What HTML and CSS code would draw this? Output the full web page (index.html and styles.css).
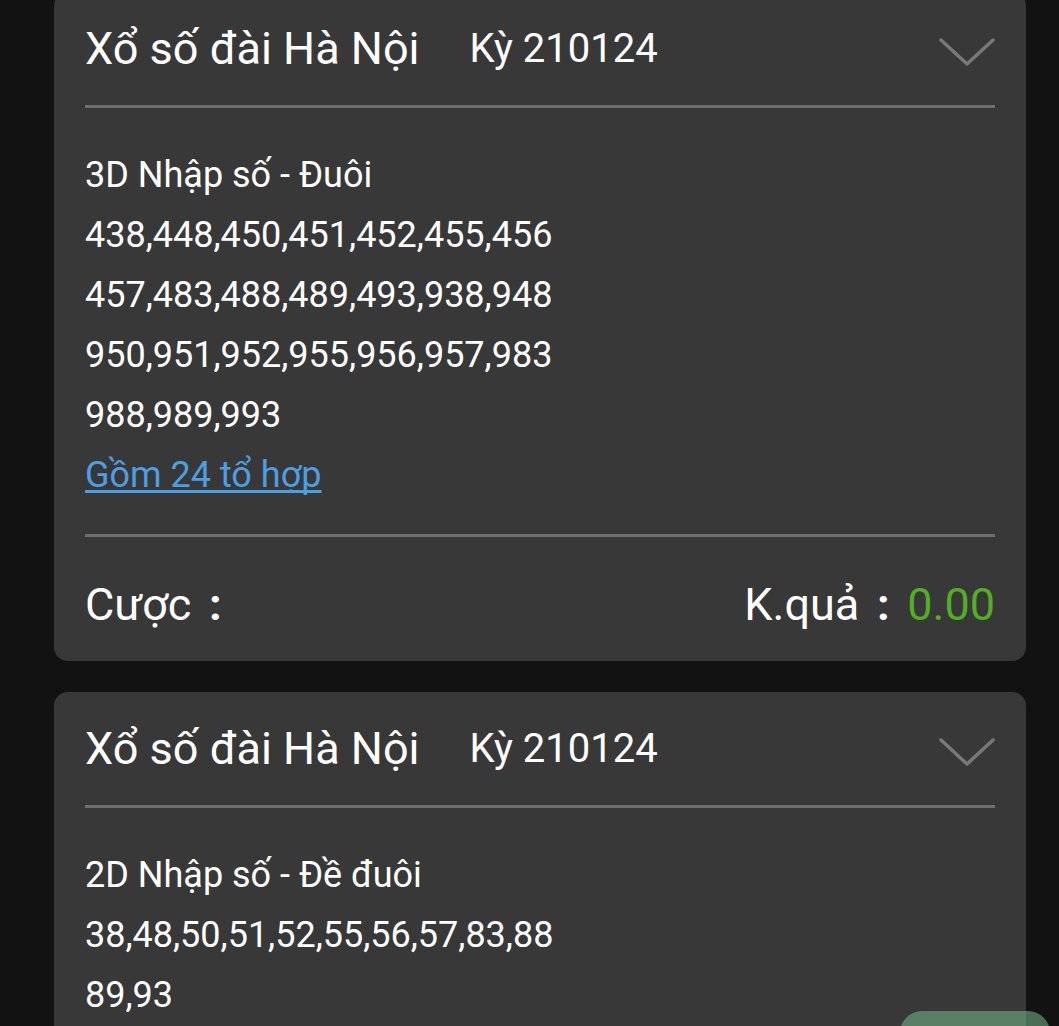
FILE: index.html
```html
<!DOCTYPE html>
<html lang="vi">
<head>
  <meta charset="UTF-8">
  <meta name="viewport" content="width=device-width, initial-scale=1.0">
  <title>Lịch sử cược</title>
  <link rel="stylesheet" href="styles.css">
</head>
<body>
  <div class="bet-list">

    <div class="bet-card">
      <div class="bet-head">
        <span class="bet-title">Xổ số đài Hà Nội</span>
        <span class="bet-issue">Kỳ 210124</span>
        <svg class="chevron" width="56" height="30" viewBox="0 0 56 30">
          <polyline points="2,3 28,27 54,3" fill="none" stroke="#787878" stroke-width="3.5" stroke-linecap="round" stroke-linejoin="round"/>
        </svg>
      </div>
      <div class="bet-body">
        <p>3D Nhập số - Đuôi</p>
        <p>438,448,450,451,452,455,456</p>
        <p>457,483,488,489,493,938,948</p>
        <p>950,951,952,955,956,957,983</p>
        <p>988,989,993</p>
        <p><a class="combo-link" href="#">Gồm 24 tổ hợp</a></p>
      </div>
      <div class="bet-foot">
        <span>Cược<span class="colon">:</span></span>
        <span>K.quả<span class="colon">:</span><span class="win">0.00</span></span>
      </div>
    </div>

    <div class="bet-card">
      <div class="bet-head">
        <span class="bet-title">Xổ số đài Hà Nội</span>
        <span class="bet-issue">Kỳ 210124</span>
        <svg class="chevron" width="56" height="30" viewBox="0 0 56 30">
          <polyline points="2,3 28,27 54,3" fill="none" stroke="#787878" stroke-width="3.5" stroke-linecap="round" stroke-linejoin="round"/>
        </svg>
      </div>
      <div class="bet-body">
        <p>2D Nhập số - Đề đuôi</p>
        <p>38,48,50,51,52,55,56,57,83,88</p>
        <p>89,93</p>
      </div>
    </div>

  </div>

  <button class="float-btn"></button>
</body>
</html>
```

FILE: styles.css
```css
body {
  margin: 0;
  padding: 0;
  background-color: #121212;
  color: #fff;
  font-family: Roboto, "Noto Sans", sans-serif;
  overflow: hidden;
}

.bet-list {
  margin-top: -8px;
  padding: 0 33px 0 54px;
}

.bet-card {
  background-color: #383838;
  border-radius: 14px;
  padding: 0 31px;
  margin-bottom: 31px;
}

.bet-head {
  display: flex;
  align-items: center;
  height: 113px;
  border-bottom: 3px solid #6e6e6e;
}

.bet-title {
  font-size: 45px;
}

.bet-issue {
  font-size: 40px;
  margin-left: 50px;
}

.chevron {
  margin-left: auto;
  margin-right: 0;
  margin-top: 6px;
}

.bet-body {
  padding: 37px 0 29px;
  border-bottom: 3px solid #6e6e6e;
}

.bet-body p {
  margin: 0;
  font-size: 36px;
  line-height: 60px;
}

.combo-link {
  color: #4d9fe3;
  text-decoration: underline;
  text-decoration-thickness: 3px;
  text-underline-offset: 3px;
  text-decoration-skip-ink: none;
}

.bet-foot {
  display: flex;
  justify-content: space-between;
  align-items: center;
  height: 124px;
  padding-top: 10px;
  box-sizing: border-box;
  font-size: 45px;
}

.colon {
  display: inline-block;
  width: 48px;
  text-align: center;
  font-weight: bold;
}

.win {
  color: #52ae23;
}

/* Floating action button, partly off screen */
.float-btn {
  position: fixed;
  left: 900px;
  top: 1011px;
  width: 150px;
  height: 64px;
  border: none;
  border-radius: 22px;
  background-color: rgba(118, 186, 138, 0.55);
}
```
